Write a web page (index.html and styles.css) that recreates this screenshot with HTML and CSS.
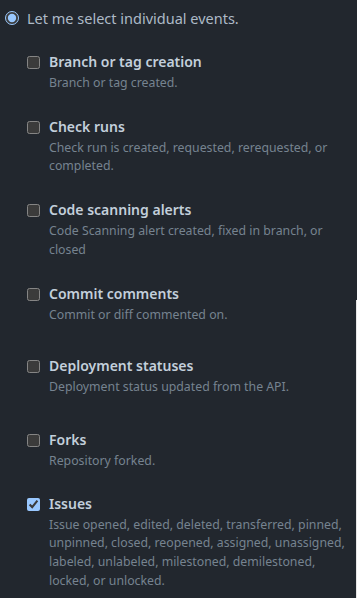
FILE: index.html
```html
<!DOCTYPE html>
<html lang="en">
<head>
<meta charset="utf-8">
<link rel="stylesheet" href="styles.css">
</head>
<body>
<div class="page">
  <label class="radio-row">
    <input type="radio" name="events" checked>
    <span class="radio-text">Let me select individual events.</span>
  </label>

  <ul class="events">
    <li class="event ev-branch">
      <input type="checkbox">
      <div class="event-body">
        <div class="event-title">Branch or tag creation</div>
        <div class="event-note">Branch or tag created.</div>
      </div>
    </li>
    <li class="event ev-check">
      <input type="checkbox">
      <div class="event-body">
        <div class="event-title">Check runs</div>
        <div class="event-note">Check run is created, requested, rerequested, or completed.</div>
      </div>
    </li>
    <li class="event ev-code">
      <input type="checkbox">
      <div class="event-body">
        <div class="event-title">Code scanning alerts</div>
        <div class="event-note">Code Scanning alert created, fixed in branch, or closed</div>
      </div>
    </li>
    <li class="event ev-commit">
      <input type="checkbox">
      <div class="event-body">
        <div class="event-title">Commit comments</div>
        <div class="event-note">Commit or diff commented on.</div>
      </div>
    </li>
    <li class="event ev-deploy">
      <input type="checkbox">
      <div class="event-body">
        <div class="event-title">Deployment statuses</div>
        <div class="event-note">Deployment status updated from the API.</div>
      </div>
    </li>
    <li class="event ev-forks">
      <input type="checkbox">
      <div class="event-body">
        <div class="event-title">Forks</div>
        <div class="event-note">Repository forked.</div>
      </div>
    </li>
    <li class="event ev-issues">
      <input type="checkbox" checked>
      <div class="event-body">
        <div class="event-title">Issues</div>
        <div class="event-note">Issue opened, edited, deleted, transferred, pinned, unpinned, closed, reopened, assigned, unassigned, labeled, unlabeled, milestoned, demilestoned, locked, or unlocked.</div>
      </div>
    </li>
  </ul>
  <div class="edge-strip"></div>
</div>
</body>
</html>
```

FILE: styles.css
```css
html, body {
  margin: 0;
  padding: 0;
  background: #22272e;
  color-scheme: dark;
}
body {
  font-family: "Noto Sans", "Open Sans", sans-serif;
  width: 357px;
  height: 598px;
  overflow: hidden;
}
.page {
  position: relative;
  height: 598px;
  padding-top: 7px;
  box-sizing: border-box;
}
.radio-row {
  display: flex;
  align-items: center;
  height: 20px;
}
.radio-row input {
  margin: 1px 8px 0 5px;
  width: 14px;
  height: 14px;
}
.radio-text {
  color: #adbac7;
  font-size: 14.5px;
  line-height: 20px;
  padding-top: 1px;
}
.events {
  list-style: none;
  margin: 0;
  padding: 0 0 0 27px;
}
.event {
  display: flex;
  align-items: flex-start;
}
.event input {
  margin: 4px 9px 0 0;
  width: 13px;
  height: 13px;
  flex: none;
}
.event-body {
  flex: 1;
  padding-right: 6px;
}
.event-title {
  color: #c3cfdb;
  font-weight: 600;
  font-size: 14px;
  line-height: 20px;
}
.event-note {
  color: #768390;
  font-size: 12.3px;
  line-height: 18.7px;
  padding-top: 2px;
}
.ev-branch { margin-top: 25px; }
.ev-check { margin-top: 24px; }
.ev-code { margin-top: 24px; }
.ev-commit { margin-top: 24px; }
.ev-deploy { margin-top: 32px; }
.ev-forks { margin-top: 33px; }
.ev-issues { margin-top: 23px; }
.edge-strip {
  position: absolute;
  right: 0;
  top: 300px;
  bottom: 0;
  width: 1px;
  background: #e6e6e6;
}
```
